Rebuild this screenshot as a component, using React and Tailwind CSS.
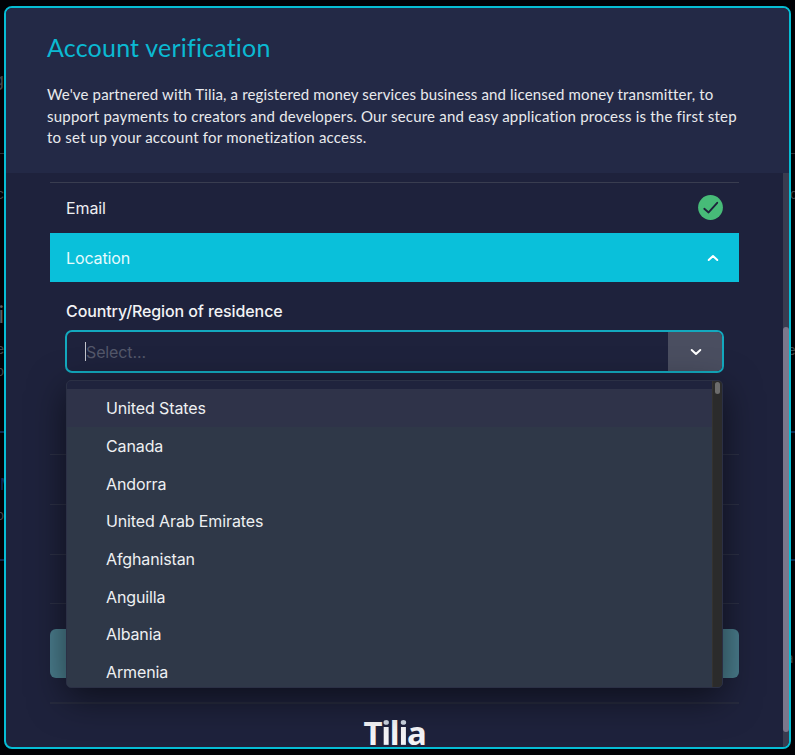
import React from "react";

const countries = [
  "United States",
  "Canada",
  "Andorra",
  "United Arab Emirates",
  "Afghanistan",
  "Anguilla",
  "Albania",
  "Armenia",
];

// Strips of the dimmed page that show on either side of the dialog
function LeftGutter() {
  return (
    <div className="flex w-[4px] shrink-0 flex-col items-end pt-[63px] text-[13px] leading-[16px] text-[#45464a]">
      <span className="text-[18px] leading-[22px]">g</span>
      <hr className="mt-[62px] w-full border-[#303136]" />
      <span className="mt-[32px]">c</span>
      <span className="mt-[98px] text-[23px] leading-[30px] text-[#5b5c5f]">i</span>
      <span className="mt-[11px]">e</span>
      <span className="mt-[6px]">o</span>
      <hr className="mt-[52px] w-full border-t-2 border-[#0c2a50]" />
      <span className="mt-[42px] self-start text-[16px] leading-[18px] text-[#102c58]">M</span>
      <span className="mt-[14px]">o</span>
      <hr className="mt-[36px] w-full border-t-2 border-[#0c2a50]" />
    </div>
  );
}

function RightGutter() {
  return (
    <div className="flex w-[4px] shrink-0 flex-col items-start pt-[147px] text-[13px] leading-[16px] text-[#45464a]">
      <hr className="w-full border-[#303136]" />
      <span className="-ml-px mt-[32px]">c</span>
      <span className="-ml-[3px] mt-[140px]">e</span>
      <hr className="mt-[73px] w-full border-t-2 border-[#0c2a50]" />
      <hr className="mt-[126px] w-full border-t-2 border-[#0c2a50]" />
      <span className="-ml-[5px] mt-[89px]">a</span>
    </div>
  );
}

function Chevron({ up = false }) {
  return (
    <svg width="12" height="8" viewBox="0 0 12 8" fill="none" stroke="white" strokeWidth="2" strokeLinecap="round" strokeLinejoin="round">
      <path d={up ? "M1.7 6L6 2L10.3 6" : "M1.7 2L6 6L10.3 2"} />
    </svg>
  );
}

function Header() {
  return (
    <header className="h-[165px] shrink-0 bg-[#232946] pl-[41px] pt-[23px] font-['Lato',sans-serif]">
      <h1 className="whitespace-nowrap text-[25px] leading-[32px] tracking-[0.2px] text-[#0bb9d2]">
        Account verification
      </h1>
      <p className="mt-[21px] whitespace-nowrap text-[15px] leading-[21.7px] text-[#e9eaed]">
        <span className="tracking-[0.147px]">We've partnered with Tilia, a registered money services business and licensed money transmitter, to</span>
        <br />
        <span className="tracking-[0.205px]">support payments to creators and developers. Our secure and easy application process is the first step</span>
        <br />
        <span className="tracking-[0.22px]">to set up your account for monetization access.</span>
      </p>
    </header>
  );
}

function CountryMenu() {
  return (
    <div className="absolute left-0 top-[50px] flex h-[308px] w-[657px] overflow-hidden rounded-[5px] border border-[#2b3045] bg-[#2f3848] shadow-[0_10px_36px_rgba(0,0,0,0.55)]">
      <ul className="flex-1 pt-[8.4px] [background:linear-gradient(#1f233d_8px,#2f3848_8px)]">
        {countries.map((name, i) => (
          <li
            key={name}
            className={
              "flex h-[37.7px] items-center pl-[39px] text-[16px] tracking-[-0.12px] text-[#eef0f2] " +
              (i === 0 ? "bg-[#2f3349]" : "")
            }
          >
            {name}
          </li>
        ))}
      </ul>
      <div className="w-[10px] border-l border-[#34322f] bg-[#2b2b2b] pl-[2px] pt-px">
        <div className="h-[12px] w-[5px] rounded-full bg-[#6c6c6c]" />
      </div>
    </div>
  );
}

function CountrySelect() {
  return (
    <div className="relative ml-4 mt-[7px] w-[658px]">
      <div className="-ml-px flex h-[43px] overflow-hidden rounded-[7px] border-2 border-[#13a9be]">
        <div className="flex flex-1 items-center pl-[18px]">
          <div className="h-[19px] w-px bg-[#c3c5cc]" />
          <span className="text-[16px] tracking-[-0.12px] text-[#53576a]">Select...</span>
        </div>
        <div className="flex w-[54px] items-center justify-center bg-[#4a4e60] pl-px">
          <Chevron />
        </div>
      </div>
      <CountryMenu />
    </div>
  );
}

// The dots of both i letters are tinted grey-blue
function Wordmark() {
  const tinted = "bg-[linear-gradient(#cdd5e0_50%,#f3f3f5_50%)] bg-[length:100%_34px] bg-clip-text text-transparent";
  return (
    <div className="mt-[9px] flex h-[34px] justify-center whitespace-nowrap font-['Noto_Sans',sans-serif] text-[33px] font-bold leading-[40px] tracking-[-1.3px] text-[#f3f3f5]">
      <span>
        T<span className={tinted}>i</span>l<span className={tinted}>i</span>a
      </span>
    </div>
  );
}

function Body() {
  return (
    <main className="flex min-h-0 flex-1 justify-between pl-[44px]">
      <div className="w-[689px] pt-[9px]">
        <div className="flex h-[50px] items-center justify-between border-t border-[#393d50] pl-4 pr-[16px] text-[16px] tracking-[-0.1px] text-[#eeeff2]">
          <span>Email</span>
          <svg width="25" height="25" viewBox="0 0 25 25" fill="none">
            <circle cx="12.5" cy="12.5" r="12.4" fill="#47bb78" />
            <path d="M6.3 13.8L10.6 17.4L19.2 7.8" stroke="#1e233c" strokeWidth="1.9" strokeLinecap="round" strokeLinejoin="round" />
          </svg>
        </div>
        <div className="mt-px flex h-[49px] items-center justify-between bg-[#0ac0da] pl-4 pr-[20px] text-[16px] tracking-[-0.12px] text-[#e6fbfd]">
          <span>Location</span>
          <Chevron up />
        </div>
        <div className="ml-4 mt-[17px] text-[16px] font-medium leading-[24px] tracking-[-0.1px] text-[#f2f3f5]">
          Country/Region of residence
        </div>
        <CountrySelect />
        <div className="mt-[81px] h-[50px] border-t border-[#2c3045]" />
        <div className="h-[50px] border-t border-[#2c3045]" />
        <div className="h-[49px] border-t border-[#2c3045]" />
        <div className="h-[26px] border-t border-[#2c3045]" />
        <div className="h-[49px] rounded-[6px] bg-[#4a7d8d]" />
        <div className="mt-[24px] border-t-2 border-[#272b3f]" />
        <Wordmark />
      </div>
      <div className="w-[6px] bg-[#393c50] pt-[154px]">
        <div className="h-[405px] w-[6px] rounded-[3px] bg-[#7b788c]" />
      </div>
    </main>
  );
}

export default function App() {
  return (
    <div className="flex h-[755px] w-[795px] overflow-hidden bg-[#010206] pt-[6px] font-['Inter',sans-serif]">
      <LeftGutter />
      <div className="relative flex h-[743px] w-[787px] shrink-0 flex-col overflow-hidden rounded-[8px] border-2 border-[#06bdd4] bg-[#1e223c]">
        <Header />
        <Body />
      </div>
      <RightGutter />
    </div>
  );
}
